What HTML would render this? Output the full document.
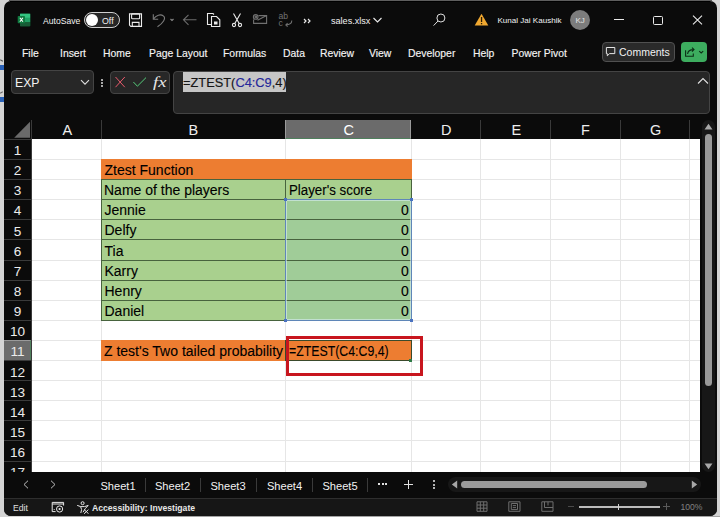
<!DOCTYPE html>
<html><head><meta charset="utf-8">
<style>
*{margin:0;padding:0;box-sizing:border-box}
html,body{width:720px;height:517px;overflow:hidden;background:#d4d4d4;font-family:"Liberation Sans",sans-serif}
.a{position:absolute}
.t{position:absolute;white-space:nowrap;line-height:1}
#win{position:absolute;left:4px;top:1px;width:713px;height:515px;background:#0b0b0b;border-radius:7px;overflow:hidden}
.w{color:#f2f2f2}
.tab{position:absolute;top:49px;font-size:10.4px;color:#f4f4f4;line-height:1;white-space:nowrap;-webkit-text-stroke:0.15px #f4f4f4}
.gl{position:absolute;background:#e1e1e1}
.ch{position:absolute;top:125px;font-size:13px;color:#e8e8e8;line-height:1;transform:scaleX(0.9)}
.rh{position:absolute;left:4px;width:27px;text-align:center;font-size:13.6px;color:#ececec;line-height:1}
.cell{position:absolute;font-size:14px;color:#000;line-height:1;white-space:nowrap;transform-origin:0 0;-webkit-text-stroke:0.1px #000}
</style></head><body>
<div class="a" style="left:40px;top:516px;width:680px;height:1px;background:#a4a4a4"></div>
<div class="a" style="left:9px;top:0;width:703px;height:1px;background:#5e5e5e"></div>
<div id="win"></div>
<div class="a" style="left:10px;top:1px;width:700px;height:1px;background:#000"></div>
<div class="a" style="left:0;top:65px;width:4px;height:4.5px;background:#2a62b8"></div>
<div class="a" style="left:0;top:97px;width:4px;height:5px;background:#2a62b8"></div>
<div class="a" style="left:0;top:59.5px;width:3px;height:1.2px;background:#555;transform:rotate(30deg)"></div>
<div class="a" style="left:0;top:92px;width:3px;height:1.2px;background:#666;transform:rotate(-30deg)"></div>

<!-- ===== TITLE BAR ===== -->
<svg class="a" style="left:16px;top:12px" width="16" height="16" viewBox="0 0 16 16">
  <rect x="4" y="1.7" width="10.2" height="12.5" rx="0.8" fill="#107c41"/>
  <rect x="4" y="1.7" width="10.2" height="4.2" fill="#33c481"/>
  <rect x="4" y="5.9" width="10.2" height="4.2" fill="#21a366"/>
  <rect x="4" y="10.1" width="10.2" height="4.1" fill="#185c37"/>
  <rect x="1.7" y="4" width="7.3" height="7.3" rx=".8" fill="#107c41"/>
  <path d="M3.9 5.7 L6.9 9.8 M6.9 5.7 L3.9 9.8" stroke="#fff" stroke-width="1.1"/>
</svg>
<div class="t w" style="left:43px;top:16.5px;font-size:8.6px">AutoSave</div>
<div class="a" style="left:83.5px;top:12px;width:36px;height:16px;border:1.2px solid #cfcfcf;border-radius:8px;background:#262626"></div>
<div class="a" style="left:86px;top:14px;width:12px;height:12px;border-radius:6px;background:#fff"></div>
<div class="t w" style="left:102px;top:16.5px;font-size:8.8px">Off</div>

<svg class="a" style="left:128px;top:12px" width="16" height="16" viewBox="0 0 16 16" fill="none" stroke="#ececec" stroke-width="1.1">
  <path d="M1.5 1.9 H13.5 V14.4 H2.8 L1.5 13.1 Z"/>
  <rect x="3.6" y="1.9" width="8" height="4.9" rx="0.8"/>
  <path d="M4.3 14.4 V10.4 H11 V14.4"/>
</svg>
<svg class="a" style="left:151px;top:12px" width="28" height="16" viewBox="0 0 28 16" fill="none" stroke="#7c7c7c" stroke-width="1.1">
  <path d="M2.3 2.3 V7.2 H7.2"/>
  <path d="M2.6 6.9 C5 3.2 9.5 1.6 12.6 4.2 C15.2 6.6 12 11 6.5 14.8"/>
  <path d="M19.5 7 L21 8.5 L22.5 7" stroke="#8a8a8a"/>
</svg>
<svg class="a" style="left:182px;top:12px" width="16" height="16" viewBox="0 0 16 16" fill="none" stroke="#6c6c6c" stroke-width="1.1">
  <path d="M1.5 7.8 H14.5 M6.5 2.8 L1.5 7.8 L6.5 12.8"/>
</svg>
<svg class="a" style="left:206px;top:12px" width="16" height="16" viewBox="0 0 16 16" fill="none" stroke="#eaeaea" stroke-width="1.1">
  <path d="M6 12.5 H1.5 V1.5 H7 L8 2.5"/>
  <path d="M5.5 4.5 H10.5 L13.8 7.8 V14.5 H5.5 Z"/>
  <rect x="8" y="9.5" width="3.5" height="3" fill="#eaeaea" stroke="none"/>
</svg>
<svg class="a" style="left:231px;top:12px" width="12" height="16" viewBox="0 0 12 16" fill="none" stroke="#eaeaea" stroke-width="1.1">
  <path d="M2.5 1.5 L8.2 11.5 M9.5 1.5 L3.8 11.5"/>
  <circle cx="3" cy="13" r="1.6"/><circle cx="9" cy="13" r="1.6"/>
</svg>
<svg class="a" style="left:252px;top:12px" width="17" height="14" viewBox="0 0 17 14" fill="none" stroke="#707070" stroke-width="1.1">
  <path d="M6.5 3.6 H14.6 V11.4 H1.6 V7.5"/>
  <path d="M5.5 8.2 L14.6 3.6"/>
  <circle cx="3.7" cy="4.9" r="2.3"/>
  <circle cx="3.9" cy="5" r="0.9"/>
</svg>
<svg class="a" style="left:278px;top:12px" width="16" height="16" viewBox="0 0 16 16" fill="none" stroke="#727272" stroke-width="1.05">
  <text x="0.4" y="7.4" font-size="8.6" fill="#727272" stroke="none" font-family="Liberation Sans">ab</text>
  <text x="0.4" y="14.2" font-size="8.6" fill="#727272" stroke="none" font-family="Liberation Sans">c</text>
  <path d="M13.8 8.6 C13.8 11.4 12.2 12.9 7.8 12.9 M9.6 11.1 L7.8 12.9 L9.6 14.7"/>
</svg>
<svg class="a" style="left:303px;top:18px" width="9" height="6" viewBox="0 0 9 6" fill="none" stroke="#eaeaea" stroke-width="1.2"><path d="M1 1 L3 3 L1 5 M5 1 L7 3 L5 5"/></svg>
<div class="t w" style="left:331px;top:16.7px;font-size:9.1px">sales.xlsx</div>
<svg class="a" style="left:372px;top:16px" width="11" height="8" viewBox="0 0 11 8" fill="none" stroke="#eaeaea" stroke-width="1.1">
  <path d="M1.5 2 L5.5 6 L9.5 2"/>
</svg>
<svg class="a" style="left:432px;top:13px" width="14" height="14" viewBox="0 0 14 14" fill="none" stroke="#e0e0e0" stroke-width="1">
  <circle cx="8.9" cy="5" r="4"/><path d="M6 8 L1.6 12.6"/>
</svg>
<svg class="a" style="left:474px;top:13px" width="15" height="13" viewBox="0 0 15 13">
  <path d="M7.5 0.7 L14.3 12.5 H0.7 Z" fill="#f0a830"/>
  <rect x="6.9" y="4" width="1.3" height="5" fill="#2a1a00"/>
  <rect x="6.9" y="10" width="1.3" height="1.3" fill="#2a1a00"/>
</svg>
<div class="t w" style="left:497.5px;top:16.9px;font-size:8.05px">Kunal Jai Kaushik</div>
<div class="a" style="left:569.5px;top:10px;width:20px;height:20px;border-radius:10px;background:#7c7c7c"></div>
<div class="t" style="left:575.5px;top:16.5px;font-size:8px;color:#e4e4e4">KJ</div>
<div class="a" style="left:614px;top:19px;width:9.5px;height:1.1px;background:#eaeaea"></div>
<div class="a" style="left:653px;top:15.5px;width:9.5px;height:9px;border:1.1px solid #eaeaea;border-radius:1.5px"></div>
<svg class="a" style="left:692px;top:15px" width="11" height="10" viewBox="0 0 11 10" fill="none" stroke="#eaeaea" stroke-width="1.1">
  <path d="M1 0.7 L10 9.3 M10 0.7 L1 9.3"/>
</svg>

<!-- ===== RIBBON TABS ===== -->
<div class="tab" style="left:22px">File</div>
<div class="tab" style="left:60px">Insert</div>
<div class="tab" style="left:103px">Home</div>
<div class="tab" style="left:149px">Page Layout</div>
<div class="tab" style="left:223px">Formulas</div>
<div class="tab" style="left:283px">Data</div>
<div class="tab" style="left:320px">Review</div>
<div class="tab" style="left:369px">View</div>
<div class="tab" style="left:408px">Developer</div>
<div class="tab" style="left:473px">Help</div>
<div class="tab" style="left:511.5px">Power Pivot</div>

<div class="a" style="left:602px;top:42px;width:73px;height:19.5px;background:#2a2a2a;border:1px solid #505050;border-radius:4px"></div>
<svg class="a" style="left:605px;top:46px" width="12" height="11" viewBox="0 0 12 11" fill="none" stroke="#e6e6e6" stroke-width="1">
  <path d="M1.4 1.5 H9.8 V7.6 H4.6 L2.3 9.8 V7.6 H1.4 Z"/>
</svg>
<div class="t w" style="left:619px;top:47.2px;font-size:10.5px">Comments</div>
<div class="a" style="left:681px;top:42px;width:26px;height:19.5px;background:#3dad5f;border-radius:4px"></div>
<svg class="a" style="left:684px;top:45px" width="22" height="13" viewBox="0 0 22 13" fill="none" stroke="#0c2e16" stroke-width="1.1">
  <path d="M1.6 5.2 V11.3 H9.3 V8.6"/>
  <path d="M3.6 9 C3.8 6.2 6 4.6 9.6 4.6 M8 2.6 L10 4.6 L8 6.6"/>
  <path d="M15.2 6.1 L17.2 8 L19.2 6.1"/>
</svg>

<!-- ===== FORMULA BAR ===== -->
<div class="a" style="left:11px;top:70px;width:83px;height:24px;background:#272727;border:1px solid #444;border-radius:4px"></div>
<div class="t w" style="left:14.6px;top:76.3px;font-size:13.6px;transform:scaleX(0.9);transform-origin:0 0">EXP</div>
<svg class="a" style="left:80px;top:79px" width="10" height="7" viewBox="0 0 10 7" fill="none" stroke="#e0e0e0" stroke-width="1.1">
  <path d="M1 1.2 L5 5.2 L9 1.2"/>
</svg>
<div class="a" style="left:101px;top:78.5px;width:2px;height:2px;background:#ddd;border-radius:1px"></div>
<div class="a" style="left:101px;top:81.8px;width:2px;height:2px;background:#ddd;border-radius:1px"></div>
<div class="a" style="left:101px;top:85px;width:2px;height:2px;background:#ddd;border-radius:1px"></div>
<div class="a" style="left:110px;top:70.5px;width:60px;height:23px;background:#272727;border:1px solid #444;border-radius:4px"></div>
<svg class="a" style="left:114px;top:76px" width="12" height="12" viewBox="0 0 12 12" fill="none" stroke="#e85a6c" stroke-width="1">
  <path d="M1.5 1 L10.8 11.2 M10.8 1 L1.5 11.2"/>
</svg>
<svg class="a" style="left:132px;top:76px" width="15" height="12" viewBox="0 0 15 12" fill="none" stroke="#55cc7a" stroke-width="1">
  <path d="M1.4 6 L5.4 10.2 L14 1.6"/>
</svg>
<div class="t" style="left:152.5px;top:74.2px;font-size:15.5px;font-family:'Liberation Serif';font-style:italic;color:#e6e6e6;transform:scaleX(1.2);transform-origin:0 0">fx</div>
<div class="a" style="left:173px;top:71px;width:537px;height:42.5px;background:#262626;border:1px solid #444;border-radius:4px"></div>
<div class="a" style="left:183px;top:72px;width:103px;height:20px;background:#c6c6c6"></div>
<div class="t" style="left:183px;top:76.3px;font-size:13.4px;color:#151515;transform:scaleX(0.958);transform-origin:0 0;-webkit-text-stroke:0.15px currentColor">=ZTEST(<span style="color:#24279a">C4:C9</span>,4)</div>
<svg class="a" style="left:697px;top:77px" width="12" height="8" viewBox="0 0 12 8" fill="none" stroke="#e0e0e0" stroke-width="1.1">
  <path d="M1 6.5 L6 1.5 L11 6.5"/>
</svg>

<!-- ===== COLUMN HEADERS ===== -->
<svg class="a" style="left:14px;top:121px" width="17" height="17" viewBox="0 0 17 17"><path d="M0.2 16.7 L16 0.8 V16.7 Z" fill="#6a6a6a"/></svg>
<div class="a" style="left:285px;top:120px;width:126px;height:19px;background:#6b6b6b;border-left:1px solid #9a9a9a;border-right:1px solid #9a9a9a;border-bottom:1.5px solid #4f7f5c"></div>
<div class="a" style="left:31px;top:120px;width:1px;height:19px;background:#3a3a3a"></div>
<div class="a" style="left:101px;top:120px;width:1px;height:19px;background:#3a3a3a"></div>
<div class="a" style="left:480px;top:120px;width:1px;height:19px;background:#3a3a3a"></div>
<div class="a" style="left:550px;top:120px;width:1px;height:19px;background:#3a3a3a"></div>
<div class="a" style="left:620px;top:120px;width:1px;height:19px;background:#3a3a3a"></div>
<div class="a" style="left:689px;top:120px;width:1px;height:19px;background:#3a3a3a"></div>
<div class="t" style="left:62.5px;top:122.6px;font-size:14.5px;color:#eee">A</div>
<div class="t" style="left:188.5px;top:122.6px;font-size:14.5px;color:#eee">B</div>
<div class="t" style="left:343.5px;top:122.6px;font-size:14.5px;color:#fff">C</div>
<div class="t" style="left:441px;top:122.6px;font-size:14.5px;color:#eee">D</div>
<div class="t" style="left:511.5px;top:122.6px;font-size:14.5px;color:#eee">E</div>
<div class="t" style="left:581px;top:122.6px;font-size:14.5px;color:#eee">F</div>
<div class="t" style="left:650px;top:122.6px;font-size:14.5px;color:#eee">G</div>

<!-- ===== GRID ===== -->
<div class="a" style="left:32px;top:139px;width:668px;height:333px;background:#fff;overflow:hidden"></div>
<div class="a" style="left:32px;top:159px;width:668px;height:1px;background:#e6e6e6"></div>
<div class="a" style="left:32px;top:179px;width:668px;height:1px;background:#e6e6e6"></div>
<div class="a" style="left:32px;top:199px;width:668px;height:1px;background:#e6e6e6"></div>
<div class="a" style="left:32px;top:219px;width:668px;height:1px;background:#e6e6e6"></div>
<div class="a" style="left:32px;top:239px;width:668px;height:1px;background:#e6e6e6"></div>
<div class="a" style="left:32px;top:260px;width:668px;height:1px;background:#e6e6e6"></div>
<div class="a" style="left:32px;top:280px;width:668px;height:1px;background:#e6e6e6"></div>
<div class="a" style="left:32px;top:300px;width:668px;height:1px;background:#e6e6e6"></div>
<div class="a" style="left:32px;top:320px;width:668px;height:1px;background:#e6e6e6"></div>
<div class="a" style="left:32px;top:340px;width:668px;height:1px;background:#e6e6e6"></div>
<div class="a" style="left:32px;top:360px;width:668px;height:1px;background:#e6e6e6"></div>
<div class="a" style="left:32px;top:380px;width:668px;height:1px;background:#e6e6e6"></div>
<div class="a" style="left:32px;top:400px;width:668px;height:1px;background:#e6e6e6"></div>
<div class="a" style="left:32px;top:420px;width:668px;height:1px;background:#e6e6e6"></div>
<div class="a" style="left:32px;top:440px;width:668px;height:1px;background:#e6e6e6"></div>
<div class="a" style="left:32px;top:461px;width:668px;height:1px;background:#e6e6e6"></div>
<div class="a" style="left:101px;top:139px;width:1px;height:333px;background:#e6e6e6"></div>
<div class="a" style="left:285px;top:139px;width:1px;height:333px;background:#e6e6e6"></div>
<div class="a" style="left:411px;top:139px;width:1px;height:333px;background:#e6e6e6"></div>
<div class="a" style="left:480px;top:139px;width:1px;height:333px;background:#e6e6e6"></div>
<div class="a" style="left:550px;top:139px;width:1px;height:333px;background:#e6e6e6"></div>
<div class="a" style="left:620px;top:139px;width:1px;height:333px;background:#e6e6e6"></div>
<div class="a" style="left:689px;top:139px;width:1px;height:333px;background:#e6e6e6"></div>
<div class="a" style="left:4px;top:139px;width:27px;height:1px;background:#3a3a3a"></div>
<div class="rh" style="top:144.1px">1</div>
<div class="a" style="left:4px;top:159px;width:27px;height:1px;background:#3a3a3a"></div>
<div class="rh" style="top:164.1px">2</div>
<div class="a" style="left:4px;top:179px;width:27px;height:1px;background:#3a3a3a"></div>
<div class="rh" style="top:184.2px">3</div>
<div class="a" style="left:4px;top:199px;width:27px;height:1px;background:#3a3a3a"></div>
<div class="rh" style="top:204.4px">4</div>
<div class="a" style="left:4px;top:219px;width:27px;height:1px;background:#3a3a3a"></div>
<div class="rh" style="top:224.5px">5</div>
<div class="a" style="left:4px;top:239px;width:27px;height:1px;background:#3a3a3a"></div>
<div class="rh" style="top:244.6px">6</div>
<div class="a" style="left:4px;top:260px;width:27px;height:1px;background:#3a3a3a"></div>
<div class="rh" style="top:264.8px">7</div>
<div class="a" style="left:4px;top:280px;width:27px;height:1px;background:#3a3a3a"></div>
<div class="rh" style="top:284.9px">8</div>
<div class="a" style="left:4px;top:300px;width:27px;height:1px;background:#3a3a3a"></div>
<div class="rh" style="top:305.1px">9</div>
<div class="a" style="left:4px;top:320px;width:27px;height:1px;background:#3a3a3a"></div>
<div class="rh" style="top:325.2px">10</div>
<div class="a" style="left:4px;top:340px;width:27px;height:1px;background:#3a3a3a"></div>
<div class="a" style="left:4px;top:340px;width:27px;height:21px;background:#6b6b6b;border-top:1px solid #9a9a9a;border-bottom:1px solid #9a9a9a;border-right:1.5px solid #4f7f5c"></div>
<div class="rh" style="top:345.3px">11</div>
<div class="a" style="left:4px;top:360px;width:27px;height:1px;background:#3a3a3a"></div>
<div class="rh" style="top:365.5px">12</div>
<div class="a" style="left:4px;top:380px;width:27px;height:1px;background:#3a3a3a"></div>
<div class="rh" style="top:385.6px">13</div>
<div class="a" style="left:4px;top:400px;width:27px;height:1px;background:#3a3a3a"></div>
<div class="rh" style="top:405.8px">14</div>
<div class="a" style="left:4px;top:420px;width:27px;height:1px;background:#3a3a3a"></div>
<div class="rh" style="top:425.9px">15</div>
<div class="a" style="left:4px;top:440px;width:27px;height:1px;background:#3a3a3a"></div>
<div class="rh" style="top:446.0px">16</div>
<div class="a" style="left:4px;top:461px;width:27px;height:1px;background:#3a3a3a"></div>
<div class="rh" style="top:466.2px">17</div>
<div class="a" style="left:31px;top:120px;width:1px;height:352px;background:#3a3a3a"></div>
<div class="a" style="left:101px;top:159px;width:311px;height:21px;background:#ed7d31"></div>
<div class="a" style="left:101px;top:179px;width:311px;height:142px;background:#a9d08e"></div>
<div class="a" style="left:286px;top:200px;width:125px;height:121px;background:#a0cc98"></div>
<div class="a" style="left:101px;top:179px;width:311px;height:1px;background:#48633e"></div>
<div class="a" style="left:101px;top:199px;width:311px;height:1px;background:#48633e"></div>
<div class="a" style="left:101px;top:219px;width:311px;height:1px;background:#48633e"></div>
<div class="a" style="left:101px;top:239px;width:311px;height:1px;background:#48633e"></div>
<div class="a" style="left:101px;top:260px;width:311px;height:1px;background:#48633e"></div>
<div class="a" style="left:101px;top:280px;width:311px;height:1px;background:#48633e"></div>
<div class="a" style="left:101px;top:300px;width:311px;height:1px;background:#48633e"></div>
<div class="a" style="left:101px;top:320px;width:311px;height:1px;background:#48633e"></div>
<div class="a" style="left:101px;top:179px;width:1px;height:142px;background:#48633e"></div>
<div class="a" style="left:285px;top:179px;width:1px;height:142px;background:#48633e"></div>
<div class="a" style="left:411px;top:179px;width:1px;height:142px;background:#48633e"></div>
<div class="a" style="left:285px;top:199px;width:127px;height:122px;border:1px solid #5f86b8"></div>
<div class="a" style="left:286px;top:200px;width:125px;height:120px;border:1px solid #d8ecf5;opacity:.6"></div>
<div class="a" style="left:284px;top:198px;width:3px;height:3px;background:#4a72c0"></div>
<div class="a" style="left:410px;top:198px;width:3px;height:3px;background:#4a72c0"></div>
<div class="a" style="left:284px;top:319px;width:3px;height:3px;background:#4a72c0"></div>
<div class="a" style="left:410px;top:319px;width:3px;height:3px;background:#4a72c0"></div>
<div class="a" style="left:101px;top:340px;width:311px;height:21px;background:#ed7d31"></div>
<div class="a" style="left:285px;top:340px;width:127px;height:21px;border:1px solid #3a4a2c"></div>
<div class="a" style="left:409px;top:359px;width:3px;height:3px;background:#2e7a46"></div>
<div class="cell" style="left:104.5px;top:163.03px">Ztest Function</div>
<div class="cell" style="left:104px;top:183.17px">Name of the players</div>
<div class="cell" style="left:288.5px;top:183.17px;transform:scaleX(0.95)">Player's score</div>
<div class="cell" style="left:104.5px;top:203.31px">Jennie</div>
<div class="cell" style="left:401px;top:203.31px">0</div>
<div class="cell" style="left:104.5px;top:223.45px">Delfy</div>
<div class="cell" style="left:401px;top:223.45px">0</div>
<div class="cell" style="left:104.5px;top:243.59px">Tia</div>
<div class="cell" style="left:401px;top:243.59px">0</div>
<div class="cell" style="left:104.5px;top:263.73px">Karry</div>
<div class="cell" style="left:401px;top:263.73px">0</div>
<div class="cell" style="left:104.5px;top:283.87px">Henry</div>
<div class="cell" style="left:401px;top:283.87px">0</div>
<div class="cell" style="left:104.5px;top:304.01px">Daniel</div>
<div class="cell" style="left:401px;top:304.01px">0</div>
<div class="cell" style="left:104px;top:344.29px">Z test's Two tailed probability</div>
<div class="cell" style="left:288.5px;top:344.29px;transform:scaleX(0.88)">=ZTEST(C4:C9,4)</div>
<!-- red box -->
<div class="a" style="left:286px;top:336px;width:137px;height:40px;border:3px solid #c8161e"></div>

<!-- ===== VERTICAL SCROLLBAR ===== -->
<div class="a" style="left:700px;top:114px;width:17px;height:358px;background:#0b0b0b"></div>
<div class="a" style="left:702px;top:120px;width:12.5px;height:352px;background:#171717;border-radius:6.5px"></div>
<svg class="a" style="left:704px;top:123px" width="9" height="7" viewBox="0 0 9 7"><path d="M0.5 6.5 L4.5 0.8 L8.5 6.5 Z" fill="#a8a8a8"/></svg>
<div class="a" style="left:705px;top:134px;width:7px;height:252px;background:#9a9a9a;border-radius:3.5px"></div>
<svg class="a" style="left:704px;top:463px" width="9" height="7" viewBox="0 0 9 7"><path d="M0.5 0.5 L4.5 6.2 L8.5 0.5 Z" fill="#a8a8a8"/></svg>

<!-- ===== SHEET TABS BAR ===== -->
<div class="a" style="left:4px;top:472px;width:713px;height:26px;background:#0b0b0b"></div>
<svg class="a" style="left:22px;top:480px" width="8" height="9" viewBox="0 0 8 9" fill="none" stroke="#bdbdbd" stroke-width="1"><path d="M6 0.7 L2 4.5 L6 8.3"/></svg>
<svg class="a" style="left:49px;top:480px" width="8" height="9" viewBox="0 0 8 9" fill="none" stroke="#bdbdbd" stroke-width="1"><path d="M2 0.7 L6 4.5 L2 8.3"/></svg>
<div class="t w" style="left:100.4px;top:481px;font-size:11.1px">Sheet1</div>
<div class="a" style="left:145px;top:478px;width:1px;height:14px;background:#3a3a3a"></div>
<div class="t w" style="left:154.9px;top:481px;font-size:11.1px">Sheet2</div>
<div class="a" style="left:200px;top:478px;width:1px;height:14px;background:#3a3a3a"></div>
<div class="t w" style="left:210.4px;top:481px;font-size:11.1px">Sheet3</div>
<div class="a" style="left:256px;top:478px;width:1px;height:14px;background:#3a3a3a"></div>
<div class="t w" style="left:266.9px;top:481px;font-size:11.1px">Sheet4</div>
<div class="a" style="left:312px;top:478px;width:1px;height:14px;background:#3a3a3a"></div>
<div class="t w" style="left:322.4px;top:481px;font-size:11.1px">Sheet5</div>
<div class="a" style="left:367px;top:478px;width:1px;height:14px;background:#3a3a3a"></div>
<div class="a" style="left:378px;top:483px;width:2px;height:2px;background:#e0e0e0"></div>
<div class="a" style="left:381.5px;top:483px;width:2px;height:2px;background:#e0e0e0"></div>
<div class="a" style="left:385px;top:483px;width:2px;height:2px;background:#e0e0e0"></div>
<div class="a" style="left:404px;top:483.5px;width:9px;height:1.1px;background:#e0e0e0"></div>
<div class="a" style="left:408px;top:479.5px;width:1.1px;height:9px;background:#e0e0e0"></div>
<div class="a" style="left:433.3px;top:480.3px;width:2.2px;height:2.2px;background:#ececec;border-radius:1px"></div>
<div class="a" style="left:433.3px;top:483.6px;width:2.2px;height:2.2px;background:#ececec;border-radius:1px"></div>
<div class="a" style="left:433.3px;top:486.9px;width:2.2px;height:2.2px;background:#ececec;border-radius:1px"></div>
<div class="a" style="left:448px;top:477px;width:253px;height:15px;background:#171717;border-radius:7.5px"></div>
<svg class="a" style="left:451px;top:480px" width="7" height="9" viewBox="0 0 7 9"><path d="M6.2 0.5 L0.8 4.5 L6.2 8.5 Z" fill="#a8a8a8"/></svg>
<div class="a" style="left:461px;top:480.5px;width:186px;height:7px;background:#9a9a9a;border-radius:3.5px"></div>
<svg class="a" style="left:690.8px;top:480px" width="7" height="9" viewBox="0 0 7 9"><path d="M0.8 0.5 L6.2 4.5 L0.8 8.5 Z" fill="#a8a8a8"/></svg>

<!-- ===== STATUS BAR ===== -->
<div class="a" style="left:4px;top:498px;width:713px;height:1px;background:#2e2e2e"></div>
<div class="a" style="left:4px;top:499px;width:713px;height:17px;background:#161616;border-radius:0 0 7px 7px"></div>
<div class="t" style="left:13px;top:503.6px;font-size:8.6px;color:#e0e0e0">Edit</div>
<svg class="a" style="left:51px;top:501px" width="14" height="12" viewBox="0 0 14 12" fill="none" stroke="#e8e8e8" stroke-width="1">
  <path d="M1.2 1.4 H12.6 V4.6 M1.2 1.4 V10.6 H4.6 M1.2 3 H12.6"/>
  <circle cx="8.6" cy="8" r="3.1"/>
  <circle cx="8.6" cy="8" r="1.1" fill="#e8e8e8" stroke="none"/>
  <circle cx="3.2" cy="8.5" r="0.6" fill="#e8e8e8" stroke="none"/>
</svg>
<svg class="a" style="left:76px;top:500.5px" width="14" height="13" viewBox="0 0 14 13" fill="none" stroke="#e8e8e8" stroke-width="1">
  <circle cx="6.6" cy="2.2" r="1.5"/>
  <path d="M1.2 4.4 L4.6 5.6 H8.6 L12.2 4.4 L9.4 7.5 M4.6 5.6 L5.6 8.6 L4.8 12 M9.4 7.5 L7 11.2"/>
  <path d="M8.2 8.6 L12.6 12.8 M12.4 8.6 L8 12.8"/>
</svg>
<div class="t" style="left:92px;top:503.6px;font-size:8.65px;font-weight:700;color:#e8e8e8">Accessibility: Investigate</div>
<svg class="a" style="left:475.5px;top:501px" width="12" height="11" viewBox="0 0 12 11" fill="none" stroke="#6e6e6e" stroke-width="1">
  <path d="M1 0.8 H11 V10.3 H1 Z M4.3 0.8 V10.3 M7.7 0.8 V10.3 M1 4 H11 M1 7.2 H11"/>
</svg>
<svg class="a" style="left:508px;top:501px" width="13" height="11" viewBox="0 0 13 11" fill="none" stroke="#6e6e6e" stroke-width="1">
  <path d="M0.8 0.8 H12 V10.3 H0.8 Z M3.3 2.5 H9.5 V8.6 H3.3 Z M4.8 4.6 H8 M4.8 6.6 H8"/>
</svg>
<svg class="a" style="left:540.5px;top:501px" width="13" height="11" viewBox="0 0 13 11" fill="none" stroke="#6e6e6e" stroke-width="1">
  <path d="M0.8 0.8 H12 V10.3 H0.8 Z M3.5 0.8 V6.5 H12 M7 0.8 V4.5"/>
</svg>
<div class="a" style="left:568px;top:506px;width:6px;height:1px;background:#4a4a4a"></div>
<div class="a" style="left:578.5px;top:506.3px;width:81px;height:1.4px;background:#bcbcbc"></div>
<div class="a" style="left:618.3px;top:504px;width:1.2px;height:5.5px;background:#d0d0d0"></div>
<div class="a" style="left:663px;top:506px;width:7px;height:1px;background:#5a5a5a"></div>
<div class="a" style="left:666px;top:503px;width:1px;height:7px;background:#5a5a5a"></div>
<div class="t" style="left:680.5px;top:503.2px;font-size:8.6px;color:#828282">100%</div>

</body></html>
